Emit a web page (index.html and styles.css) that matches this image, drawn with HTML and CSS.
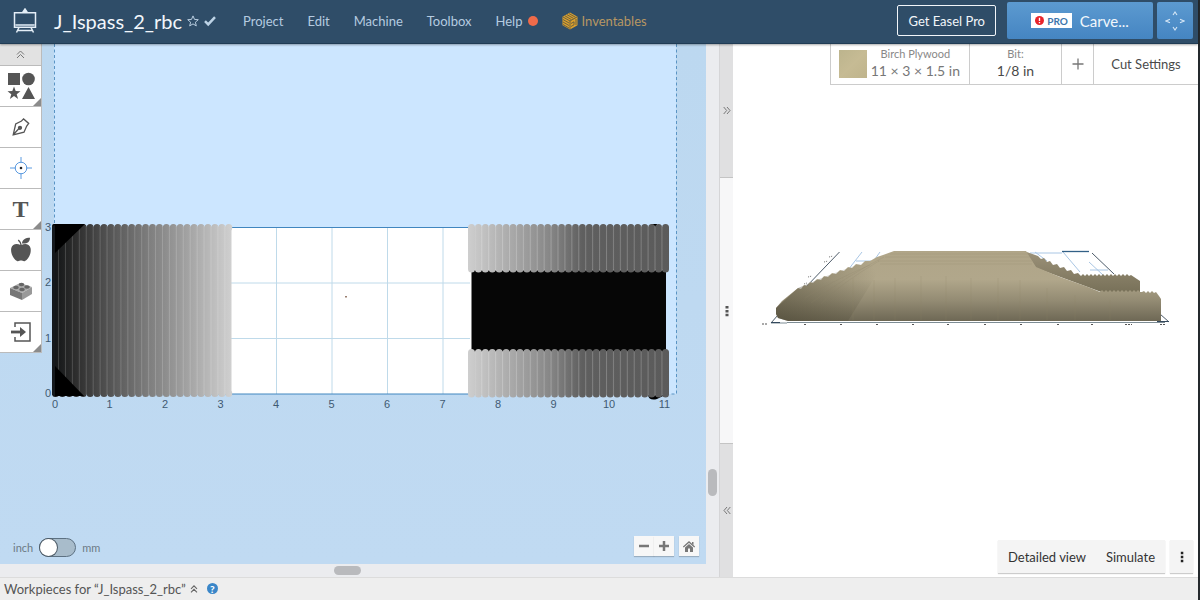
FILE: index.html
```html
<!DOCTYPE html>
<html lang="en">
<head>
<meta charset="utf-8">
<title>Easel - J_Ispass_2_rbc</title>
<link rel="stylesheet" href="styles.css">
</head>
<body>
<div class="app">
  <header class="topbar">
    <a class="logo" href="#" aria-label="Easel home">
      <svg width="24" height="26" viewBox="0 0 24 26" fill="none" stroke="#e4eef7" stroke-width="1.5"><path d="M1.5 4.700h21v14.500h-21zM2.500 17h19M6 19.500l-2.500 5M18 19.500l2.500 5M5 22.500h14"/><path d="M10 4l2-3 2 3z" fill="#e4eef7"/></svg>
    </a>
    <h1 class="title">J_Ispass_2_rbc</h1>
    <button class="star" aria-label="Favorite"><svg width="12" height="12" viewBox="0 0 12 12" fill="none" stroke="#b9cde0"><path d="M6 .9l1.500 3.500 3.800.3-2.900 2.500.9 3.700L6 8.900l-3.300 2 .9-3.700L.7 4.700l3.800-.3z"/></svg></button>
    <svg class="saved" width="12" height="12" viewBox="0 0 12 12" fill="none" stroke="#bdd3e6" stroke-width="2.500"><path d="M1 6.200l3.200 3.200L11 2.200"/></svg>
    <nav class="menu">
      <a href="#">Project</a>
      <a href="#">Edit</a>
      <a href="#">Machine</a>
      <a href="#">Toolbox</a>
      <a href="#" class="help">Help<span class="alert-dot"></span></a>
      <a href="#" class="inventables"><svg width="16" height="18" viewBox="0 0 16 18"><path d="M8 .5l7.500 4.200v8.600L8 17.500.5 13.300V4.700z" fill="#dca02c"/><path d="M1 5l7 4 7-4M8 9v8.500M3 3.900l6.500 3.700M5 2.700l6.500 3.700M7 1.600l6.500 3.700M1 7.500l6 3.500M1 10l6 3.500M1 12.500l6 3.500M9 11.500l3-1.700v3L9 14.500M14 7v6" fill="none" stroke="#5f5b43" stroke-width=".9"/></svg>Inventables</a>
    </nav>
    <button class="get-pro">Get Easel Pro</button>
    <button class="carve"><span class="pro"><svg width="9" height="9" viewBox="0 0 8 8"><circle cx="4" cy="4" r="4" fill="#e8242b"/><path d="M4 1.500v3M4 5.300v1.200" stroke="#fff" stroke-width="1.200"/></svg>PRO</span>Carve...</button>
    <button class="jog" aria-label="Jog machine"><svg width="20" height="20" viewBox="0 0 20 20" fill="none" stroke="#d6e7f6" stroke-width="1.100"><path d="M8 4l2-3 2 3M8 16l2 3 2-3M5 8.200L1 10l4 1.800M15 8.200l4 1.800-4 1.800"/></svg></button>
  </header>

  <main class="workspace">
    <section class="editor">
      <div class="canvas">
        <svg class="drawing" viewBox="0 44 706 520" preserveAspectRatio="xMinYMin slice" role="img" aria-label="Design canvas">
          <defs>
            <linearGradient id="bed" x1="0" y1="0" x2="0" y2="1"><stop offset="0" stop-color="#bcd8f0"/><stop offset="1" stop-color="#c0daf2"/></linearGradient>
            <linearGradient id="rampL" gradientUnits="userSpaceOnUse" x1="52" y1="0" x2="232" y2="0">
              <stop offset="0" stop-color="#101214"/><stop offset=".04" stop-color="#191b1c"/><stop offset=".12" stop-color="#2b2b2b"/><stop offset=".3" stop-color="#505050"/><stop offset=".55" stop-color="#808080"/><stop offset=".75" stop-color="#a2a2a2"/><stop offset="1" stop-color="#d0d0d0"/>
            </linearGradient>
            <linearGradient id="rampR" gradientUnits="userSpaceOnUse" x1="468" y1="0" x2="669" y2="0">
              <stop offset="0" stop-color="#cecece"/><stop offset=".2" stop-color="#acacac"/><stop offset=".4" stop-color="#888"/><stop offset=".57" stop-color="#5f5f5f"/><stop offset="1" stop-color="#5b5b5b"/>
            </linearGradient>
            <pattern id="seamL" patternUnits="userSpaceOnUse" x="51.100" y="0" width="6.930" height="400"><path d="M.5 0v400" stroke="#fff" stroke-opacity=".17"/></pattern>
            <pattern id="seamR" patternUnits="userSpaceOnUse" x="467.400" y="0" width="6.930" height="400"><path d="M.5 0v400" stroke="#fff" stroke-opacity=".22"/></pattern>
          </defs>
          <rect x="0" y="44" width="706" height="520" fill="url(#bed)"/>
          <rect x="54" y="44" width="622" height="350" fill="#cce6ff"/>
          <path d="M54.500 44v350M676.500 44v350H666" fill="none" stroke="#5a94c4" stroke-dasharray="3 2.500"/>
          <rect x="54" y="227.500" width="612" height="166.500" fill="#fff"/>
          <path d="M276.500 228v166M332 228v166M387.500 228v166M443 228v166M220 283h250M220 338.500h250" stroke="#bfdaea" fill="none"/>
          <path d="M54 227.500h612M54 394h612" stroke="#4186bf"/>
          <rect x="345" y="296" width="2" height="1.500" fill="#9b8070"/>

          <path d="M648 395q1 6 9 4l8-4zM651 224h6v3h-6z"/>
          <rect x="52" y="227" width="179.500" height="167" fill="url(#rampL)"/>
          <path d="M55.500 227.500H232M55.500 393.500H232" stroke="url(#rampL)" stroke-width="7" stroke-linecap="round" stroke-dasharray="0 6.930"/>
          <rect x="57" y="226" width="172" height="169" fill="url(#seamL)"/>
          <path d="M52 226q0-2 2-2h31L55 253v-28M55 366l29 30H55z"/>
          <path d="M53.500 226v169" stroke="#15191d" stroke-width="3"/>

          <rect x="471.500" y="270" width="194.500" height="82" fill="#060606"/>
          <g id="strip">
            <rect x="468" y="228" width="201" height="41" fill="url(#rampR)"/>
            <path d="M471.500 227.500H669M471.500 269H669" stroke="url(#rampR)" stroke-width="7" stroke-linecap="round" stroke-dasharray="0 6.930"/>
            <rect x="475" y="226" width="192" height="45" fill="url(#seamR)"/>
          </g>
          <use href="#strip" y="125"/>

          <g class="ruler">
            <g text-anchor="middle"><text x="55" y="408">0</text><text x="109.500" y="408">1</text><text x="165" y="408">2</text><text x="220.500" y="408">3</text><text x="276" y="408">4</text><text x="331.500" y="408">5</text><text x="387" y="408">6</text><text x="442.500" y="408">7</text><text x="498" y="408">8</text><text x="553.500" y="408">9</text><text x="609" y="408">10</text><text x="664.500" y="408">11</text></g>
            <g text-anchor="end"><text x="51" y="231">3</text><text x="51" y="286">2</text><text x="51" y="342">1</text><text x="51" y="397">0</text></g>
          </g>
        </svg>

        <div class="tools">
          <button class="collapse" aria-label="Collapse tools"><svg width="9" height="9" viewBox="0 0 9 9" fill="none" stroke="#777"><path d="M1 4.500L4.500 1 8 4.500M1 8l3.500-3.500L8 8"/></svg></button>
          <button class="tool more" aria-label="Shapes"><svg width="28" height="28" viewBox="0 0 28 28" fill="#555"><path d="M1 1h12v12H1zM21.500 15L28 27H15z"/><circle cx="21.500" cy="7" r="6.300"/><path d="M7 14.500l1.700 4.600 4.800.1-3.800 3 1.400 4.700L7 24.100l-4.100 2.800 1.400-4.700-3.800-3 4.800-.1z"/></svg></button>
          <button class="tool" aria-label="Pen"><svg width="18" height="18" viewBox="0 0 18 18" fill="none" stroke="#555" stroke-width="1.300"><path d="M1.200 16.800L3.700 6l5.800-3L11.600.9l5.100 4.500-2 2.700L12 14.200zM1.200 16.800l6-6.500"/><circle cx="8" cy="9.800" r="1.500" fill="#555"/></svg></button>
          <button class="tool" aria-label="Drill"><svg width="24" height="24" viewBox="0 0 24 24" fill="none" stroke="#5b9ae0"><circle cx="12" cy="12" r="5.800"/><path d="M1 12h6M17 12h6M12 1v6M12 17v6"/><circle cx="12" cy="12" r="1.300" fill="#222" stroke="none"/></svg></button>
          <button class="tool more letter" aria-label="Text">T</button>
          <button class="tool" aria-label="Icons"><svg width="22" height="26" viewBox="0 0 22 26" fill="#555"><path d="M11.500 8c3-2 8-1.500 9 3 1.200 5-2 11.500-5.500 13-1.500.6-2.600-.5-4-.5s-2.500 1.100-4 .5C3.500 22.500.2 16 1.300 11c1-4.500 6-5 9.200-3z"/><path d="M12 6.500C12 2.500 15.500.7 20 .7c0 4.300-3 6.300-8 5.800z"/><path d="M11.200 8.500C10.700 5.500 9.500 4 8.300 3" fill="none" stroke="#555" stroke-width="1.500"/></svg></button>
          <button class="tool" aria-label="Apps"><svg width="24" height="18" viewBox="0 0 24 18"><path d="M1 6l10-5 12 4-10 6z" fill="#aaa"/><path d="M1 6l12 5v7L1 13z" fill="#777"/><path d="M13 11l10-6v7l-10 6z" fill="#999"/><g fill="#666"><ellipse cx="7" cy="5.500" rx="2.800" ry="1.700"/><ellipse cx="12.500" cy="2.500" rx="2.800" ry="1.700"/><ellipse cx="13" cy="7.500" rx="2.800" ry="1.700"/><ellipse cx="18" cy="5" rx="2.800" ry="1.700"/></g></svg></button>
          <button class="tool more" aria-label="Import"><svg width="20" height="20" viewBox="0 0 20 20" fill="none" stroke="#555" stroke-width="1.500"><path d="M4 5V1h15v18H4v-4"/><path d="M0 10h10" stroke-width="2.800"/><path d="M9 5l6 5-6 5z" fill="#555" stroke="none"/></svg></button>
        </div>

        <label class="units"><span>inch</span><input type="checkbox" role="switch"><span>mm</span></label>

        <div class="zoom">
          <div class="zoom-pair">
            <button aria-label="Zoom out"><svg width="12" height="12" viewBox="0 0 12 12"><path d="M1 6h10" stroke="#777" stroke-width="2.500"/></svg></button>
            <button aria-label="Zoom in"><svg width="12" height="12" viewBox="0 0 12 12"><path d="M1 6h10M6 1v10" stroke="#777" stroke-width="2.500"/></svg></button>
          </div>
          <button class="home" aria-label="Home view"><svg width="12" height="11" viewBox="0 0 12 11" fill="#777"><path d="M.3 6L6 .9 11.700 6" fill="none" stroke="#777" stroke-width="1.300"/><path d="M9 1h1.500v3L9 2.700zM6 3l4 3.600V11H7V7.500H5V11H2V6.600z"/></svg></button>
        </div>
      </div>
      <div class="track vertical"><span class="thumb"></span></div>
      <div class="track horizontal"><span class="thumb"></span></div>
    </section>

    <div class="splitter">
      <button class="fold" aria-label="Collapse preview"><svg width="8" height="9" viewBox="0 0 8 9" fill="none" stroke="#777"><path d="M.7 1l3 3.500-3 3.500M4 1l3 3.500L4 8"/></svg></button>
      <button class="grip" aria-label="Resize panels"><svg width="4" height="12" viewBox="0 0 4 12" fill="#555"><path d="M.5 1h3v2.500h-3zM.5 4.900h3v2.500h-3zM.5 8.800h3v2.500h-3z"/></svg></button>
      <button class="fold" aria-label="Collapse editor"><svg width="8" height="9" viewBox="0 0 8 9" fill="none" stroke="#777"><path d="M4 1L1 4.500 4 8M7.300 1l-3 3.500 3 3.500"/></svg></button>
    </div>

    <section class="preview">
      <div class="settings">
        <button class="material"><span class="swatch"></span><span class="pair"><span class="caption">Birch Plywood</span><span class="value">11 × 3 × 1.5 in</span></span></button>
        <button class="bit"><span class="pair"><span class="caption">Bit:</span><span class="value">1/8 in</span></span></button>
        <button class="add" aria-label="Add bit"><svg width="12" height="12" viewBox="0 0 12 12"><path d="M.5 6h11M6 .5v11" stroke="#777" stroke-width="1.300"/></svg></button>
        <button class="cut">Cut Settings</button>
      </div>
      <svg class="model" viewBox="733 85 465 455" preserveAspectRatio="xMidYMin meet" role="img" aria-label="Carve preview">
        <defs>
          <linearGradient id="wood" gradientUnits="userSpaceOnUse" x1="0" y1="251" x2="0" y2="322"><stop offset="0" stop-color="#b0a588"/><stop offset=".4" stop-color="#b1a78b"/><stop offset=".7" stop-color="#938b73"/><stop offset="1" stop-color="#6c6653"/></linearGradient>
          <linearGradient id="side" gradientUnits="userSpaceOnUse" x1="775" y1="310" x2="875" y2="270"><stop offset="0" stop-color="#47422f" stop-opacity=".5"/><stop offset="1" stop-color="#47422f" stop-opacity="0"/></linearGradient>
          <linearGradient id="back" x1="0" y1="0" x2="0" y2="1"><stop offset="0" stop-color="#9c9279"/><stop offset="1" stop-color="#777058"/></linearGradient>
        </defs>
        <path d="M862 252l-14 18M880 252l-5 7M856 261h15M1035 252l12 9M1063 252l17 20M1089 262l14 13M1090 270h18M1030 253h32" fill="none" stroke="#a9c6e4"/>
        <path d="M839.500 252L804 289M778 315l-7 8M1092 253l22 21M1160 314l9 8" fill="none" stroke="#4d5b69"/>
        <path d="M1062 251.500h27" stroke="#326086" stroke-width="1.300"/>
        <path d="M829 257l4-1M824 262l4-1M808 277l4-1M804 284l3-1" stroke="#777" stroke-dasharray="1 1"/>
        <path d="M1024 251L1038 256l3 3 3-1 3 4 3-1 3 4 4-1 3 4 4-1 3 4 4-1 3 4 4-1 3 3l2-2 2 2 2-2 2 2 2-2 2 2 2-2 2 2 2-2 2 2 2-2 2 2 2-2 2 2 2-2 2 2 2-2 2 2 2-2 2 2 2-2 2 2 2-2 2 2 2-1L1140 281V292L1104 293 1036 268z" fill="url(#back)"/>
        <path d="M894 251H1026L1036 267L1060 277 1088 287 1100 292l2-2 2 2 2-2 2 2 2-2 2 2 2-2 2 2 2-2 2 2 2-2 2 2 2-2 2 2 2-2 2 2 2-2 2 2 2-2 2 2L1142 292l2-1 2 2 2-2 2 2 2-2 2 2 2-1 3 4 2 3V321H788L778 318 776 314V308L782 301 798 288 801 289 804 285 807 286 810 282 813 283 817 279 821 280 824 276 828 277 832 273 836 274 840 270 844 271 848 267 852 268 856 264 861 265 865 261 870 261 877 257 883 255z" fill="url(#wood)"/>
        <path d="M890 253L848 268 824 277 798 288 776 308v6l2 4 10 3h60l32-52z" fill="url(#side)"/>
        <g fill="none" stroke="#8e846b" stroke-opacity=".2"><path d="M890 254h138M885 257h145M878 261h154M880 264h152M884 257q-39 20-73 46M879 261q-38 22-58 43M870 265q-40 17-65 33"/><path d="M853 278v42M874 280v40M895 278v42M921 276v44M946 276v44M971 278v42M998 278v42M1020 280v40M1047 288v32M1075 295v25M1110 300v20"/></g>
        <path d="M771 323h16M787 322.500H1165" fill="none" stroke="#5c6f78" stroke-width=".8"/>
        <path d="M762 324h6M804 324.500h3M840 324.500h3M876 324.500h3M912 324.500h2M947 324.500h3M984 324.500h2M1020 324.500h3M1057 324.500h3M1091 324.500h3M1125 324.500h7M1160 324.500h6" stroke="#555" stroke-dasharray="2 1"/>
        <path d="M771 322.500h9M1157 321.500h12" stroke="#34495e"/>
      </svg>
      <div class="actions">
        <div class="action-pair"><button>Detailed view</button><button>Simulate</button></div>
        <button class="overflow" aria-label="More options"><svg width="4" height="12" viewBox="0 0 4 12" fill="#222"><path d="M.8.800h2.500v2.500H.8zM.8 4.800h2.500v2.500H.8zM.8 8.800h2.500v2.500H.8z"/></svg></button>
      </div>
    </section>
  </main>

  <footer class="statusbar">
    <button class="workpieces">Workpieces for “J_Ispass_2_rbc”<svg width="8" height="8" viewBox="0 0 8 8" fill="none" stroke="#666" stroke-width="1.100"><path d="M1 3.800l3-3 3 3M1 7.300l3-3 3 3"/></svg></button>
    <button class="hint" aria-label="Help">?</button>
  </footer>
</div>
</body>
</html>
```

FILE: styles.css
```css
* { box-sizing: border-box; }
body { margin: 0; font-family: Lato, "Open Sans", sans-serif; font-size: 13px; line-height: 16px; color: #4a4a4a; background: #fff; }
button { font: inherit; color: inherit; background: none; border: 0; padding: 0; margin: 0; cursor: pointer; display: flex; align-items: center; justify-content: center; }
a { color: inherit; text-decoration: none; }
svg { display: block; flex-shrink: 0; }

.app { display: flex; flex-direction: column; height: 100vh; border-right: 2px solid #24292d; }

.topbar { display: flex; align-items: center; flex: 0 0 44px; padding: 0 5px 2px 13px; background: #2f4d68; border-bottom: 1px solid #203c55; box-shadow: 0 1px 2px #0005; z-index: 1; }
.title { margin: 0 5px 0 17px; font-size: 20px; line-height: 24px; font-weight: 400; color: #f1f6fb; }
.saved { margin-left: 5px; }
.menu { display: flex; align-items: center; gap: 24px; margin-left: 27px; margin-right: auto; color: #b5cbe0; }
.help, .inventables { display: flex; align-items: center; }
.alert-dot { width: 10px; height: 10px; margin-left: 6px; border-radius: 50%; background: #ef6b4a; }
.inventables { gap: 3px; color: #b79763; }
.get-pro { height: 31px; padding: 0 10px; border: 1px solid #f2f6fa; border-radius: 2px; color: #f2f6fa; }
.carve, .jog { height: 37px; margin-left: 4px; background: linear-gradient(#5c9ad0, #4585c2); border-radius: 2px; color: #f2f7fc; }
.carve { width: 146px; gap: 8px; margin-left: 11px; font-size: 15px; }
.pro { display: flex; align-items: center; gap: 3px; height: 15px; padding: 0 4px; background: #fff; color: #3c76ad; font-size: 10px; font-weight: 700; }
.jog { width: 36px; }

.workspace { display: flex; flex: 1; min-height: 0; }
.editor { flex: 719; min-width: 0; display: grid; grid-template: 1fr 13px / 1fr 13px; background: #ebecef; }
.canvas { position: relative; min-width: 0; min-height: 0; overflow: hidden; background: #c0daf2; }
.drawing { width: 100%; height: 100%; }
.ruler { font-family: "Liberation Sans", Arial, sans-serif; font-size: 11px; fill: #3f5a72; }

.tools { position: absolute; top: 0; left: 0; width: 42px; border-right: 1px solid #bbb; background: #fff; }
.tools button { width: 100%; border-bottom: 1px solid #bbb; }
.collapse { height: 22px; background: #e2e2e2; }
.tool { position: relative; height: 41px; }
.tool.more::after { content: ""; position: absolute; right: 0; bottom: 0; border: 4px solid; border-color: transparent #8b8b8b #8b8b8b transparent; }
.letter { font: 700 24px/24px "Liberation Serif", serif; color: #555; }

.units { position: absolute; left: 13px; bottom: 7px; display: flex; align-items: center; gap: 6px; font-size: 11px; color: #6d7a85; }
.units input { appearance: none; width: 37px; height: 19px; margin: 0; border: 1px solid #5d7182; border-radius: 10px; background: #a8bccb; }
.units input::before { content: ""; display: block; width: 17px; height: 17px; border-radius: 50%; background: #fff; box-shadow: 0 0 0 1px #4d5b67; }

.zoom { position: absolute; right: 7px; bottom: 8px; display: flex; gap: 5px; }
.zoom-pair { display: flex; }
.zoom button { width: 20px; height: 20px; background: #f7f7f7; box-shadow: 0 1px 1px #0003; }

.track { display: flex; justify-content: center; }
.vertical { flex-direction: column; align-items: center; }
.thumb { background: #b9babd; border-radius: 5px; }
.vertical::before { content: ""; flex-grow: 425; }
.vertical::after { content: ""; flex-grow: 68; }
.vertical .thumb { width: 9px; height: 27px; }
.horizontal { align-items: center; }
.horizontal::before { content: ""; flex-grow: 334; }
.horizontal::after { content: ""; flex-grow: 345; }
.horizontal .thumb { width: 27px; height: 9px; }

.splitter { display: flex; flex-direction: column; flex: 0 0 14px; border-left: 1px solid #d5d5d7; background: #f7f7f8; }
.fold { flex: 1; background: #e0e0e1; }
.grip { flex: 2; border: solid #c4c4c4; border-width: 1px 0; }

.preview { flex: 465; min-width: 0; display: flex; flex-direction: column; background: #fff; }
.settings { display: flex; align-self: flex-end; height: 41px; border: solid #ccc; border-width: 0 0 1px 1px; }
.settings button + button { border-left: 1px solid #ccc; }
.pair { display: flex; flex-direction: column; align-items: center; }
.caption { font-size: 11px; line-height: 14px; color: #888; }
.value { font-size: 14px; line-height: 20px; }
.material { gap: 4px; padding: 0 9px 0 8px; color: #777; }
.swatch { width: 28px; height: 28px; background: linear-gradient(135deg, #bcb48d, #c6bb94 50%, #bfb48c); }
.bit { width: 92px; }
.add { width: 32px; }
.cut { width: 105px; }
.model { flex: 1; width: 100%; min-height: 0; }
.actions { display: flex; justify-content: flex-end; gap: 5px; padding: 0 5px 4px; }
.action-pair { display: flex; background: #f4f4f4; box-shadow: 0 1px 1px #0003; }
.actions button { height: 33px; padding: 0 10px; background: #f4f4f4; color: #333; }
.actions .overflow { width: 23px; padding: 0; box-shadow: 0 1px 1px #0003; }

.statusbar { display: flex; align-items: center; gap: 9px; flex: 0 0 23px; padding: 0 4px 1px; background: #eee; border-top: 1px solid #dcdcdc; color: #555; }
.workpieces { gap: 4px; }
.hint { width: 11px; height: 11px; border-radius: 50%; background: #3a86c8; color: #fff; font-size: 10px; font-weight: 900; }
```
